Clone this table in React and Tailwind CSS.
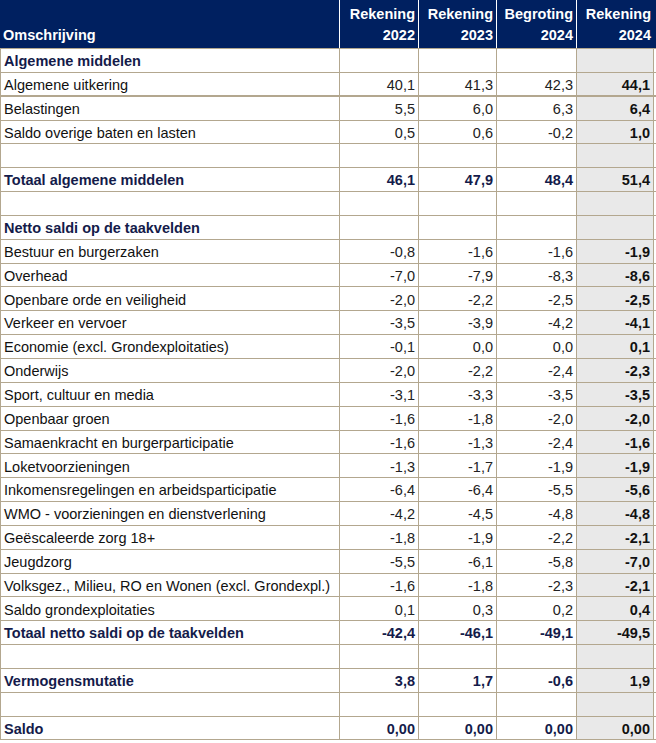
const rows = [
  { label: 'Algemene middelen', kind: 'section' },
  { label: 'Algemene uitkering', v: ['40,1', '41,3', '42,3', '44,1'], thick: true },
  { label: 'Belastingen', v: ['5,5', '6,0', '6,3', '6,4'] },
  { label: 'Saldo overige baten en lasten', v: ['0,5', '0,6', '-0,2', '1,0'] },
  { kind: 'empty' },
  { label: 'Totaal algemene middelen', v: ['46,1', '47,9', '48,4', '51,4'], kind: 'total' },
  { kind: 'empty' },
  { label: 'Netto saldi op de taakvelden', kind: 'section' },
  { label: 'Bestuur en burgerzaken', v: ['-0,8', '-1,6', '-1,6', '-1,9'] },
  { label: 'Overhead', v: ['-7,0', '-7,9', '-8,3', '-8,6'] },
  { label: 'Openbare orde en veiligheid', v: ['-2,0', '-2,2', '-2,5', '-2,5'] },
  { label: 'Verkeer en vervoer', v: ['-3,5', '-3,9', '-4,2', '-4,1'] },
  { label: 'Economie (excl. Grondexploitaties)', v: ['-0,1', '0,0', '0,0', '0,1'] },
  { label: 'Onderwijs', v: ['-2,0', '-2,2', '-2,4', '-2,3'] },
  { label: 'Sport, cultuur en media', v: ['-3,1', '-3,3', '-3,5', '-3,5'] },
  { label: 'Openbaar groen', v: ['-1,6', '-1,8', '-2,0', '-2,0'] },
  { label: 'Samaenkracht en burgerparticipatie', v: ['-1,6', '-1,3', '-2,4', '-1,6'] },
  { label: 'Loketvoorzieningen', v: ['-1,3', '-1,7', '-1,9', '-1,9'] },
  { label: 'Inkomensregelingen en arbeidsparticipatie', v: ['-6,4', '-6,4', '-5,5', '-5,6'] },
  { label: 'WMO - voorzieningen en dienstverlening', v: ['-4,2', '-4,5', '-4,8', '-4,8'] },
  { label: 'Geëscaleerde zorg 18+', v: ['-1,8', '-1,9', '-2,2', '-2,1'] },
  { label: 'Jeugdzorg', v: ['-5,5', '-6,1', '-5,8', '-7,0'] },
  { label: 'Volksgez., Milieu, RO en Wonen (excl. Grondexpl.)', v: ['-1,6', '-1,8', '-2,3', '-2,1'] },
  { label: 'Saldo grondexploitaties', v: ['0,1', '0,3', '0,2', '0,4'] },
  { label: 'Totaal netto saldi op de taakvelden', v: ['-42,4', '-46,1', '-49,1', '-49,5'], kind: 'total' },
  { kind: 'empty' },
  { label: 'Vermogensmutatie', v: ['3,8', '1,7', '-0,6', '1,9'], kind: 'total' },
  { kind: 'empty' },
  { label: 'Saldo', v: ['0,00', '0,00', '0,00', '0,00'], kind: 'total' },
]

const widths = ['w-[340px]', 'w-[79px]', 'w-[78px]', 'w-[80px]', 'w-[77px]']
const heads = [
  ['Rekening', '2022'],
  ['Rekening', '2023'],
  ['Begroting', '2024'],
  ['Rekening', '2024'],
]

function Row({ row }) {
  const bold = row.kind === 'section' || row.kind === 'total'
  const vals = row.v || ['', '', '', '']
  return (
    <div
      className={`flex h-[23.85px] ${row.thick ? 'border-b-2' : 'border-b'} border-[#b3a78f]`}
    >
      <div
        className={`${widths[0]} shrink-0 border-l border-r border-[#b3a78f] pl-[3px] pt-[2px] flex items-center ${
          bold ? 'font-bold text-[#141b4a]' : 'text-[#111]'
        }`}
      >
        {row.label}
      </div>
      {vals.map((val, i) => (
        <div
          key={i}
          className={`${widths[i + 1]} shrink-0 border-r border-[#b3a78f] pr-[3px] pt-[2px] flex items-center justify-end ${
            i === 3 ? 'bg-[#e9e9e9] font-bold text-[#111]' : bold ? 'font-bold text-[#141b4a]' : 'text-[#222]'
          }`}
        >
          {val}
        </div>
      ))}
    </div>
  )
}

export default function App() {
  return (
    <div className="w-[656px] bg-white text-[14.5px] leading-none" style={{ fontFamily: '"Liberation Sans", Arial, sans-serif' }}>
      <div className="flex h-[49px] bg-[#002060] text-white font-bold border-b border-[#b3a78f]">
        <div className={`${widths[0]} shrink-0 border-r border-white pl-[3px] pb-[6px] flex items-end`}>
          Omschrijving
        </div>
        {heads.map((h, i) => (
          <div
            key={i}
            className={`${widths[i + 1]} shrink-0 ${i < 3 ? 'border-r border-white' : ''} pr-[3px] pb-[6px] flex flex-col items-end justify-end gap-[6px]`}
          >
            <span>{h[0]}</span>
            <span>{h[1]}</span>
          </div>
        ))}
      </div>
      {rows.map((r, i) => (
        <Row key={i} row={r} />
      ))}
    </div>
  )
}
